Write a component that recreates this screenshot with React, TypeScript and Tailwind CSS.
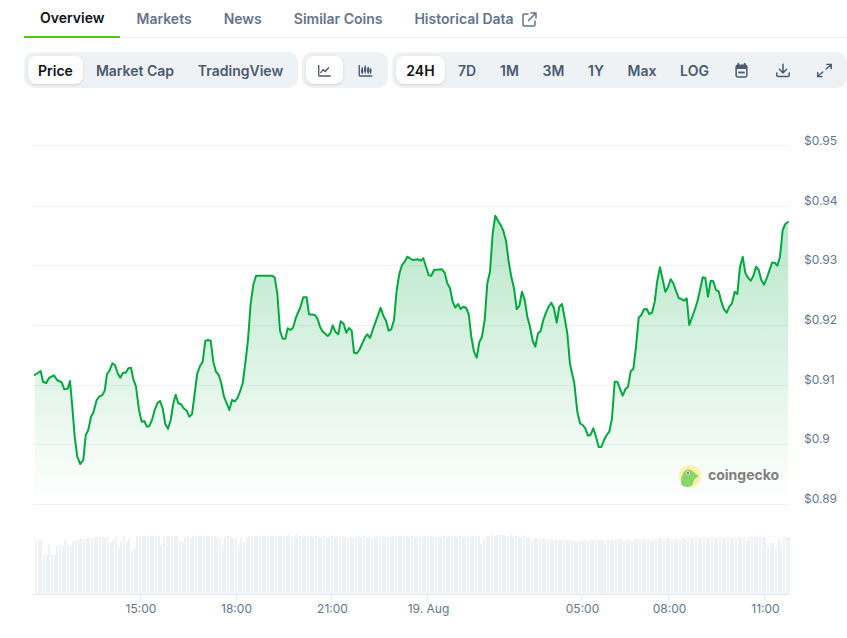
import React from "react";

const z5: number[][] = [[44,345],[62,333],[69,365],[79,369],[87,354],[102,346],[111,360],[125,367],[133,388],[143,386],[150,363],[157,440],[164,530],[172,590],[181,612],[190,600],[197,525],[205,510],[213,470],[220,458],[230,420],[238,410],[247,405],[254,392],[261,342],[268,333],[277,310],[285,315],[293,340],[301,353],[309,338],[317,338],[325,325],[333,323],[340,357],[348,380],[357,450],[365,485],[373,483],[381,500],[388,498],[396,480],[404,450],[412,430],[420,423],[428,445],[436,492],[444,506],[452,480],[460,430],[467,404],[475,430],[483,433],[491,445],[500,452],[508,470],[516,463],[524,400],[532,340],[540,318],[548,305],[556,243],[564,240],[572,243],[580,305],[588,335],[596,345],[604,370],[612,410],[628,450],[636,420],[644,424],[652,415],[660,395],[668,370],[676,310],[684,240],[692,130],[700,75],[708,47],[756,47],[764,52],[772,100],[780,212],[788,236],[796,236],[803,205],[811,210],[819,203],[827,175],[835,155]];
const z6: number[][] = [[30,325],[40,292],[50,292],[57,343],[75,345],[83,358],[90,380],[97,393],[113,408],[121,400],[128,376],[136,395],[145,403],[152,364],[161,372],[169,398],[177,384],[185,392],[192,458],[200,460],[208,450],[225,412],[232,403],[240,414],[248,390],[272,323],[280,347],[288,362],[296,392],[304,388],[312,360],[320,270],[328,222],[336,195],[344,185],[352,170],[368,180],[384,178],[392,182],[400,175],[416,226],[424,227],[432,210],[456,208],[464,218],[472,250],[480,265],[488,305],[496,323],[504,312],[512,327],[520,320],[528,323],[536,342],[544,410],[552,455],[560,473],[568,427],[576,410],[584,360],[592,250],[600,215],[608,100],[616,47],[624,62],[632,75],[640,92],[648,122],[656,185],[664,230],[672,265],[680,327],[688,318],[696,275],[704,300],[712,350],[720,380],[728,423],[736,440],[744,400],[752,393],[760,360],[768,338],[776,320],[784,308],[792,325],[800,368],[808,320],[816,312],[824,355],[832,400],[840,492]];
const z7: number[][] = [[73,520],[82,605],[90,640],[98,645],[106,655],[114,677],[122,674],[130,655],[138,680],[146,711],[154,711],[162,690],[170,675],[178,665],[186,625],[194,515],[202,515],[218,557],[226,538],[234,530],[242,484],[250,477],[258,410],[266,323],[274,315],[282,298],[290,297],[298,312],[306,308],[314,275],[322,212],[330,172],[346,245],[354,232],[362,208],[370,220],[386,264],[394,267],[402,272],[410,265],[418,345],[434,300],[442,275],[450,240],[458,202],[466,204],[474,260],[482,212],[490,214],[498,240],[506,244],[514,275],[522,298],[530,308],[538,290],[546,280],[554,245],[562,252],[570,170],[578,140],[586,188],[594,203],[602,212],[610,198],[618,170],[626,180],[634,210],[642,224],[650,205],[658,182],[666,158],[674,158],[682,167],[690,140],[698,60],[706,42],[714,36]];

const pts: number[][] = [
  ...z5.map(([x, y]) => [20 + x / 3, 260 + y / 3]),
  ...z6.map(([x, y]) => [290 + x / 3, 200 + y / 3]),
  ...z7.map(([x, y]) => [550 + x / 3, 210 + y / 3]),
];
const linePath = pts.map(([x, y], i) => `${i ? "L" : "M"}${x.toFixed(1)} ${y.toFixed(1)}`).join(" ");
const areaPath = `${linePath} L${pts[pts.length - 1][0].toFixed(1)} 504 L${pts[0][0].toFixed(1)} 504 Z`;

const groups: { x0: number; zx0: number; v: number[] }[] = [
  { x0: 30, zx0: 15, v: [30,30,30,75,75,45,72,75,48,48,48,33,45,47,33,30,30,27,27,24,24,24,21,21,21,21,21,21,36,30,21,54,33,18,36,24,63,57,18,18,18,18,18,18,18,18,18,45,18,18,18,18,18,18,33,36,21,18,24,18,18,18,18,18,18,18,18,18,21,24] },
  { x0: 220, zx0: 5, v: [48,18,18,21,24,24,48,21,36,21,18,18,18,18,18,18,18,18,18,18,18,18,18,18,18,15,21,18,15,18,21,18,18,18,18,18,21,21,18,21,21,18,18,18,21,18,21,24,21,24,21,18,21,18,21,21,24,18,18,21,18,21,21,21,18,18,18,18,18,18,18] },
  { x0: 410, zx0: 3, v: [18,21,21,21,18,18,18,18,21,21,21,18,18,21,18,18,18,18,18,21,21,21,18,18,18,18,42,24,18,18,15,18,15,15,15,18,18,15,18,18,21,21,18,21,21,30,24,24,27,27,27,27,27,30,27,30,30,30,30,30,30,33,36,30,30,30,33,30,30,30,30,30] },
  { x0: 600, zx0: 5, v: [30,42,30,30,30,27,27,27,33,30,30,33,27,27,27,27,27,27,33,30,27,24,24,24,24,24,27,27,27,27,24,27,24,24,24,24,24,24,24,24,24,24,24,24,24,24,24,24,24,24,24,21,24,21,33,21,21,21,21,21,21,21,48,39,39,54,27,39,21,21,21] },
];
const bars = groups.flatMap((g) =>
  g.v.map((v, i) => ({ x: Math.round(g.x0 + (g.zx0 + 8 * i) / 3), y: 530 + Math.round(v / 3) }))
);

const grid = [145.5, 206.5, 265.5, 325.5, 385.5, 444.5, 504.5];
const yLabels: [string, number][] = [["$0.95", 145],["$0.94", 205],["$0.93", 264],["$0.92", 324],["$0.91", 384],["$0.9", 443],["$0.89", 503]];
const xLabels: [string, number, number][] = [["15:00", 141, 140.5],["18:00", 236.5, 236.5],["21:00", 332.5, 331.5],["19. Aug", 428.5, 427.5],["05:00", 582.5, 581.5],["08:00", 669.5, 668.5],["11:00", 765.5, 764.5]];

const Tab = ({ children, active }: { children: React.ReactNode; active?: boolean }) => (
  <div className={active ? "flex items-center gap-2 px-4 h-[38px] border-b-2 border-[#4bcc00] text-[#0d1217] font-semibold text-sm" : "flex items-center gap-2 px-4 h-[38px] text-[#64748b] font-semibold text-sm"}>
    {children}
  </div>
);

const Btn = ({ children, active, cls = "" }: { children: React.ReactNode; active?: boolean; cls?: string }) => (
  <div className={`flex items-center justify-center shrink-0 h-7 pt-px rounded-lg text-sm font-semibold ${active ? "bg-white text-[#0d1217] shadow-sm" : "text-[#4a5a70]"} ${cls}`}>
    {children}
  </div>
);

const s = { fill: "none", stroke: "#4a5a70", strokeWidth: 1.5, strokeLinecap: "round" as const, strokeLinejoin: "round" as const };

export default function App() {
  return (
    <div className="w-[847px] h-[638px] overflow-hidden bg-white font-['Inter',sans-serif]">
      <div className="ml-6 flex border-b border-[#eff2f5] h-[38px]">
        <Tab active>Overview</Tab>
        <Tab>Markets</Tab>
        <Tab>News</Tab>
        <Tab>Similar Coins</Tab>
        <Tab>
          Historical Data
          <svg width="15" height="15" viewBox="0 0 15 15" fill="none" stroke="#64748b" strokeWidth="1.5" strokeLinecap="round" strokeLinejoin="round">
            <path d="M6 2H2.200C1.500 2 1 2.500 1 3.200v9.600c0 .7.500 1.200 1.200 1.200h9.600c.7 0 1.200-.5 1.200-1.200V9" />
            <path d="M9 1h5v5M14 1 6.500 8.500" />
          </svg>
        </Tab>
      </div>
      <div className="ml-6 mt-3.5 flex gap-1 h-9">
        <div className="flex items-center gap-[3px] px-1 bg-[#eff2f5] rounded-[10px] w-[274px]">
          <Btn active cls="w-[55px]">Price</Btn>
          <Btn cls="w-[98px]">Market Cap</Btn>
          <Btn cls="w-[105px] ml-[1px]">TradingView</Btn>
        </div>
        <div className="flex items-center gap-1 px-1 bg-[#eff2f5] rounded-[10px] w-[86px]">
          <Btn active cls="w-[37px]">
            <svg width="15" height="12" viewBox="0 0 14 13" {...s}>
              <path d="M.7.7v10c0 .7.400 1.200 1.100 1.200h11.500" />
              <path d="M3 8.200 5.600 5l2.200 2 3.600-4" />
            </svg>
          </Btn>
          <Btn cls="w-[37px]">
            <svg width="15" height="12" viewBox="0 0 15 13" {...s}>
              <path d="M.7.7v10c0 .7.400 1.200 1.100 1.200h12.500" />
              <path d="M4 3v6M7.200 1v7.500M10.400 2.500v6.500M13 4v5" />
              <path d="M3.600 5h.9v3h-.9zM6.800 3h.9v4h-.9zM10 4h.9v3.500H10zM12.700 5h.7v2.500h-.7z" fill="#4a5a70" strokeWidth="1" />
            </svg>
          </Btn>
        </div>
        <div className="flex items-center pl-1 bg-[#eff2f5] rounded-[10px] flex-1">
          <Btn active cls="w-[49px]">24H</Btn>
          <Btn cls="w-[44px]">7D</Btn>
          <Btn cls="w-[41px]">1M</Btn>
          <Btn cls="w-[47px]">3M</Btn>
          <Btn cls="w-[38px]">1Y</Btn>
          <Btn cls="w-[54px]">Max</Btn>
          <Btn cls="w-[51px]">LOG</Btn>
          <Btn cls="w-[43px] pb-px">
            <svg width="13" height="15" viewBox="0 0 12 14">
              <path d="M3 .5v2M9 .5v2" stroke="#4a5a70" strokeWidth="1.600" strokeLinecap="round" />
              <rect x="1" y="2" width="10" height="11" rx="1.600" fill="none" stroke="#4a5a70" strokeWidth="1.400" />
              <rect x="1" y="2" width="10" height="3.600" fill="#4a5a70" />
              <rect x="3" y="8" width="6" height="1.700" fill="#4a5a70" />
            </svg>
          </Btn>
          <Btn cls="w-[40px] pb-px">
            <svg width="14" height="15" viewBox="0 0 14 14" {...s}>
              <path d="M7 .8v8.400M3.400 5.800 7 9.400l3.600-3.600" />
              <path d="M.8 9.400v2.300c0 .8.600 1.400 1.400 1.400h9.600c.8 0 1.400-.6 1.400-1.400V9.400" />
            </svg>
          </Btn>
          <Btn cls="w-[40px] ml-[1px] pb-px">
            <svg width="15" height="15" viewBox="0 0 16 15" {...s}>
              <path d="M10.500 1h4.700v4.500M15.200 1 9.800 6" />
              <path d="M5.500 14H.8V9.500M.8 14l5.400-5" />
            </svg>
          </Btn>
        </div>
      </div>

      <svg width="847" height="550" viewBox="0 88 847 550" className="block font-['Inter',sans-serif]">
        <defs>
          <linearGradient id="area" x1="0" y1="215" x2="0" y2="504" gradientUnits="userSpaceOnUse">
            <stop offset="0" stopColor="#00a83e" stopOpacity="0.28" />
            <stop offset="1" stopColor="#00a83e" stopOpacity="0" />
          </linearGradient>
        </defs>
        {grid.map((y) => (
          <line key={y} x1="33" x2="789" y1={y} y2={y} stroke="#eff2f5" strokeWidth="1" />
        ))}
        <path d={areaPath} fill="url(#area)" />
        <path d={linePath} fill="none" stroke="#00a83e" strokeWidth="2" strokeLinejoin="round" strokeLinecap="round" />
        {bars.map((b, i) => (
          <rect key={i} x={b.x} y={b.y} width="2" height={594 - b.y} fill="#eff2f5" shapeRendering="crispEdges" />
        ))}
        <line x1="33" x2="789" y1="594.5" y2="594.5" stroke="#e6e9ee" strokeWidth="1" />
        {xLabels.map(([t, x, tick]) => (
          <g key={t}>
            <line x1={tick} x2={tick} y1="594" y2="600" stroke="#e6e9ee" strokeWidth="1" />
            <text x={x} y="613" textAnchor="middle" fontSize="12" fill="#64748b">{t}</text>
          </g>
        ))}
        {yLabels.map(([t, y]) => (
          <text key={t} x="804" y={y} fontSize="12" fill="#64748b">{t}</text>
        ))}
        <circle cx="690" cy="476" r="11" fill="#fbf0a8" />
        <path d="M681 482C681.500 476 683 470.500 688 469.500C691 469 692.500 471 694 472.500L698.500 476C697 478 695 478.500 694 479.500C693.500 482 693 484 691.500 486C689 487.200 685 487.200 683 486C681.500 485 681 484 681 482Z" fill="#8cd56a" />
        <circle cx="688" cy="473" r="1.800" fill="#fff" />
        <circle cx="688" cy="473" r="1.100" fill="#5a6b50" />
        <text x="708" y="479.500" fontSize="14" fontWeight="700" fill="#808080">coingecko</text>
      </svg>
    </div>
  );
}
